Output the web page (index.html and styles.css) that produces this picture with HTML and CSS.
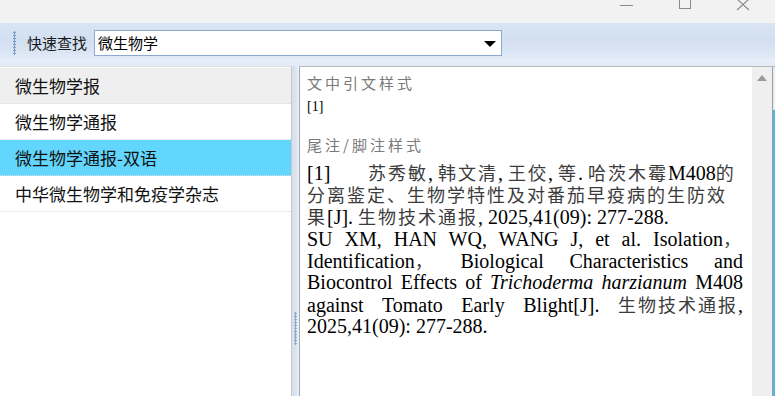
FILE: index.html
```html
<!DOCTYPE html>
<html lang="zh-CN">
<head>
<meta charset="utf-8">
<title>快速查找</title>
<link rel="stylesheet" href="styles.css">
</head>
<body>
<div class="window">
  <div class="titlebar">
    <div class="winbtn">
      <svg width="58" height="23" viewBox="0 0 58 23"><line x1="21" y1="5.5" x2="34" y2="5.5" stroke="#8a8a8a" stroke-width="1"/></svg>
    </div>
    <div class="winbtn">
      <svg width="58" height="23" viewBox="0 0 58 23"><rect x="22.5" y="-3.5" width="11" height="12" fill="none" stroke="#8a8a8a" stroke-width="1"/></svg>
    </div>
    <div class="winbtn">
      <svg width="58" height="23" viewBox="0 0 58 23"><path d="M22 -1 L34 10 M34 -1 L22 10" stroke="#8a8a8a" stroke-width="1.1" fill="none"/></svg>
    </div>
  </div>

  <div class="toolbar">
    <div class="grip"></div>
    <span class="tb-label">快速查找</span>
    <div class="combo">
      <span class="combo-text">微生物学</span>
      <span class="combo-arrow"></span>
    </div>
  </div>

  <div class="main">
    <div class="list-pane">
      <div class="item hover">微生物学报</div>
      <div class="item">微生物学通报</div>
      <div class="item selected">微生物学通报-双语</div>
      <div class="item">中华微生物学和免疫学杂志</div>
    </div>
    <div class="splitter"><div class="split-grip"></div></div>
    <div class="detail-pane">
      <div class="detail">
        <div class="sec-title">文中引文样式</div>
        <div class="cite-mark">[1]</div>
        <div class="sec-title second">尾注/脚注样式</div>
        <div class="ref">
          <div class="ref-line"><span class="ref-no">[1]</span><span class="zh">苏秀敏</span>, <span class="zh">韩文清</span>, <span class="zh">王佼</span>, <span class="zh">等</span>. <span class="zh">哈茨木霉</span>M408<span class="zh">的</span></div>
          <div class="ref-line"><span class="zh">分离鉴定、生物学特性及对番茄早疫病的生防效</span></div>
          <div class="ref-line"><span class="zh">果</span>[J]. <span class="zh">生物技术通报</span>, 2025,41(09): 277-288.</div>
          <div class="ref-line just">SU XM, HAN WQ, WANG J, et al. <span class="word">Isolation<span class="zh">，</span></span></div>
          <div class="ref-line just"><span class="word">Identification<span class="zh">，</span></span> Biological Characteristics and</div>
          <div class="ref-line just">Biocontrol Effects of <i>Trichoderma harzianum</i> M408</div>
          <div class="ref-line just">against Tomato Early Blight[J]. <span class="word"><span class="zh">生物技术通报</span>,</span></div>
          <div class="ref-line">2025,41(09): 277-288.</div>
        </div>
      </div>
      <div class="vscroll"><span class="up-arrow"></span></div>
      <div class="edge"></div>
    </div>
  </div>
</div>
</body>
</html>
```

FILE: styles.css
```css
* { box-sizing: border-box; }
html, body { margin: 0; padding: 0; }
body {
  width: 775px;
  height: 396px;
  overflow: hidden;
  background: #f2f2f2;
  font-family: "Noto Sans CJK SC", "Noto Sans", sans-serif;
}
.window {
  display: flex;
  flex-direction: column;
  height: 396px;
}
.titlebar {
  height: 23px;
  background: #f2f2f2;
  display: flex;
  justify-content: flex-end;
  padding-right: 2px;
  flex: none;
}
.winbtn { width: 58px; height: 23px; }
.winbtn svg { display: block; }

.toolbar {
  height: 39px;
  flex: none;
  display: flex;
  align-items: center;
  padding-left: 13px;
  background: linear-gradient(#d9e5f4 0%, #d3e0f1 45%, #dae5f4 75%, #e8f0fa 100%);
}
.grip {
  width: 4px;
  height: 24px;
  margin-right: 10px;
  background-image: radial-gradient(circle, #7e9bc7 1px, transparent 1.2px);
  background-size: 3px 3px;
  background-repeat: repeat-y;
  background-position: 0 0;
}
.tb-label {
  font-size: 15px;
  color: #1a1a1a;
  line-height: 20px;
  margin-right: 7px;
}
.combo {
  width: 408px;
  height: 26px;
  border: 1px solid #8fa8d0;
  background: #fff;
  display: flex;
  align-items: center;
  justify-content: space-between;
  padding: 0 5px 0 3px;
}
.combo-text { font-size: 15px; color: #000; line-height: 20px; }
.combo-arrow {
  width: 0; height: 0;
  border-left: 6px solid transparent;
  border-right: 6px solid transparent;
  border-top: 6px solid #000;
  margin-top: 2px;
}

.main {
  flex: 1;
  display: flex;
  padding-top: 4px;
  background: #e4ecf8;
  min-height: 0;
}
.list-pane {
  width: 292px;
  flex: none;
  background: #fff;
  border-top: 1px solid #e0e0e0;
  border-right: 1px solid #c8c8c8;
  padding-top: 1px;
}
.item {
  height: 36px;
  display: flex;
  align-items: center;
  padding-left: 15px;
  font-size: 17px;
  color: #111;
  border-bottom: 1px dotted #dcdcdc;
}
.item.hover { background: #efefef; }
.item.selected { background: #62d6fd; }

.splitter {
  width: 7px;
  flex: none;
  background: linear-gradient(90deg, #d5dfed, #dbe5f2 60%, #eef3fa);
  display: flex;
  align-items: flex-end;
  justify-content: center;
  padding-bottom: 51px;
}
.split-grip {
  width: 3px;
  height: 33px;
  background-image: radial-gradient(circle, #8ea8d2 1px, transparent 1.3px);
  background-size: 3px 3px;
}

.detail-pane {
  flex: 1;
  display: flex;
  border-top: 1px solid #b8b8b8;
  border-left: 1px solid #a8a8a8;
  min-width: 0;
}
.detail {
  flex: 1;
  background: #fff;
  padding: 5px 8px 0 7px;
  min-width: 0;
}
.sec-title {
  font-size: 15px;
  line-height: 22px;
  color: #7a7a7a;
  letter-spacing: 3px;
}
.sec-title.second { margin-top: 20px; }
.cite-mark {
  font-family: "Liberation Serif", serif;
  font-size: 14px;
  line-height: 15px;
  margin-top: 5px;
  color: #000;
}
.ref {
  font-family: "Liberation Serif", "Noto Sans CJK SC", serif;
  font-size: 20px;
  line-height: 22px;
  color: #000;
  margin-top: 5px;
  width: 436px;
}
.ref-line { white-space: nowrap; height: 22px; }
.ref-line.just {
  white-space: normal;
  text-align: justify;
  text-align-last: justify;
}
.ref-no { display: inline-block; width: 61px; }
.zh {
  font-family: "Noto Sans CJK SC", sans-serif;
  font-size: 18px;
  letter-spacing: 2px;
  color: #3c3c3c;
}
.word {
  display: inline-block;
  white-space: nowrap;
}
.vscroll {
  width: 20px;
  flex: none;
  background: #efefef;
  display: flex;
  justify-content: center;
  padding-top: 8px;
}
.up-arrow {
  width: 0; height: 0;
  border-left: 5px solid transparent;
  border-right: 5px solid transparent;
  border-bottom: 6px solid #9a9a9a;
}
.edge {
  width: 3px;
  flex: none;
  border-left: 1px solid #9c9c9c;
  background: linear-gradient(#e8eef6 0, #e8eef6 43px, #4db7e6 43px);
}
```
